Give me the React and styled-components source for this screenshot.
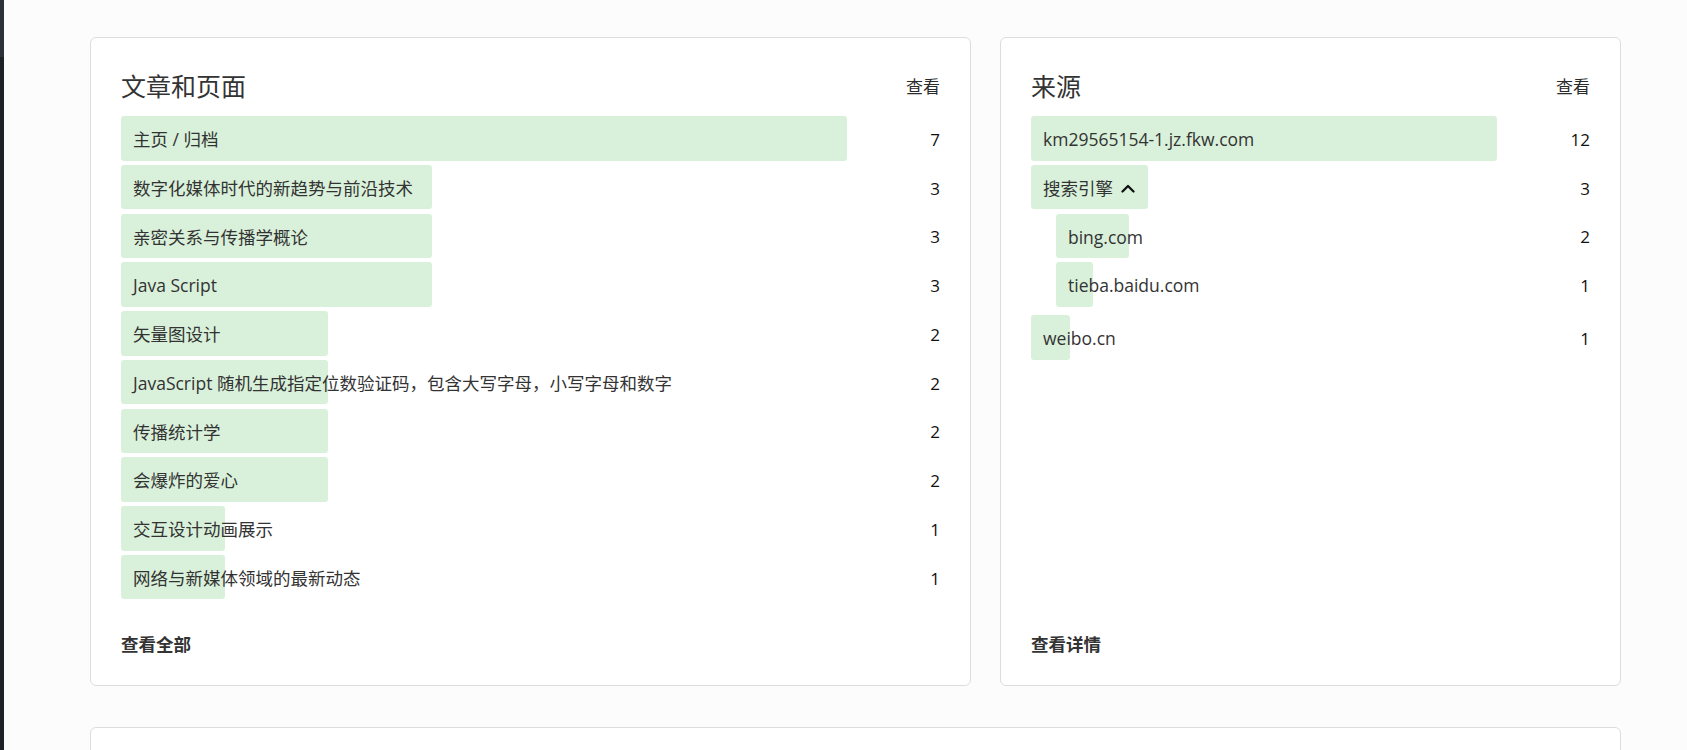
import React from "react";
import styled, { createGlobalStyle } from "styled-components";

const GlobalStyle = createGlobalStyle`
  html, body { margin: 0; padding: 0; background: #fcfcfc; }
  body {
    font-family: "Open Sans", "Noto Sans CJK SC", sans-serif;
    color: #333;
    overflow: hidden;
  }
  * { box-sizing: border-box; }
`;

const Shell = styled.div`
  display: flex;
  min-height: 750px;
`;

const EdgeStrip = styled.div`
  width: 4px;
  flex: none;
  background: linear-gradient(to bottom, #2c3238 0, #2c3238 57px, #1e2226 57px);
`;

const Main = styled.main`
  flex: 1;
  padding: 37px 66px 0 86px;
  display: grid;
  grid-template-columns: 881fr 621fr;
  column-gap: 29px;
  row-gap: 41px;
  align-content: start;
`;

const Card = styled.section`
  background: #fff;
  border: 1px solid #dddddd;
  border-radius: 6px;
  padding: 30px 30px 27px;
  display: flex;
  flex-direction: column;
  min-width: 0;
  grid-column: ${(p) => (p.$wide ? "1 / -1" : "auto")};
  height: ${(p) => (p.$wide ? "200px" : "auto")};
`;

const Header = styled.div`
  display: flex;
  align-items: center;
  justify-content: space-between;
  height: 37px;
`;

const Title = styled.h2`
  margin: 0;
  font-size: 25px;
  font-weight: 400;
  color: #333;
  line-height: 37px;
`;

const HeaderLink = styled.a`
  font-size: 17px;
  color: #2a2a2a;
  text-decoration: none;
  line-height: 1;
`;

const List = styled.div`
  margin-top: 11px;
  display: flex;
  flex-direction: column;
  gap: 4.25px;
`;

const Group = styled.div`
  display: flex;
  flex-direction: column;
  gap: 4.25px;
  padding-left: 25px;
  margin-bottom: 4px;
`;

const Row = styled.div`
  display: flex;
  align-items: center;
  height: 44.5px;
`;

const BarCell = styled.div`
  position: relative;
  flex: 1;
  height: 100%;
  display: flex;
  align-items: center;
  min-width: 0;
`;

const BarFill = styled.div`
  position: absolute;
  left: 0;
  top: 0;
  bottom: 0;
  background: #d9f1da;
  border-radius: 3px;
`;

const Label = styled.span`
  position: relative;
  padding: 2px 12px 0;
  font-size: 17.5px;
  line-height: 1.5;
  color: #333;
  white-space: nowrap;
  display: inline-flex;
  align-items: center;
  gap: 8px;
`;

const Count = styled.span`
  width: 93px;
  flex: none;
  padding-top: 2px;
  text-align: right;
  font-size: 17px;
  color: #111;
`;

const Footer = styled.a`
  margin-top: auto;
  padding-top: 32px;
  font-size: 17.5px;
  line-height: 26.25px;
  font-weight: 700;
  color: #333;
  text-decoration: none;
`;

const Chevron = () => (
  <svg width="14" height="9" viewBox="0 0 14 9" fill="none">
    <polyline
      points="1.5,7.5 7,2 12.5,7.5"
      stroke="#111"
      strokeWidth="2.3"
      strokeLinecap="round"
      strokeLinejoin="round"
    />
  </svg>
);

const BarRow = ({ label, value, max, icon }) => (
  <Row>
    <BarCell>
      <BarFill style={{ width: `${(value / max) * 100}%` }} />
      <Label>
        {label}
        {icon}
      </Label>
    </BarCell>
    <Count>{value}</Count>
  </Row>
);

const posts = [
  ["主页 / 归档", 7],
  ["数字化媒体时代的新趋势与前沿技术", 3],
  ["亲密关系与传播学概论", 3],
  ["Java Script", 3],
  ["矢量图设计", 2],
  ["JavaScript 随机生成指定位数验证码，包含大写字母，小写字母和数字", 2],
  ["传播统计学", 2],
  ["会爆炸的爱心", 2],
  ["交互设计动画展示", 1],
  ["网络与新媒体领域的最新动态", 1],
];

export default function App() {
  return (
    <>
      <GlobalStyle />
      <Shell>
        <EdgeStrip />
        <Main>
          <Card>
            <Header>
              <Title>文章和页面</Title>
              <HeaderLink>查看</HeaderLink>
            </Header>
            <List>
              {posts.map(([label, v]) => (
                <BarRow key={label} label={label} value={v} max={7} />
              ))}
            </List>
            <Footer>查看全部</Footer>
          </Card>
          <Card>
            <Header>
              <Title>来源</Title>
              <HeaderLink>查看</HeaderLink>
            </Header>
            <List>
              <BarRow label="km29565154-1.jz.fkw.com" value={12} max={12} />
              <BarRow label="搜索引擎" value={3} max={12} icon={<Chevron />} />
              <Group>
                <BarRow label="bing.com" value={2} max={12} />
                <BarRow label="tieba.baidu.com" value={1} max={12} />
              </Group>
              <BarRow label="weibo.cn" value={1} max={12} />
            </List>
            <Footer>查看详情</Footer>
          </Card>
          <Card $wide />
        </Main>
      </Shell>
    </>
  );
}
